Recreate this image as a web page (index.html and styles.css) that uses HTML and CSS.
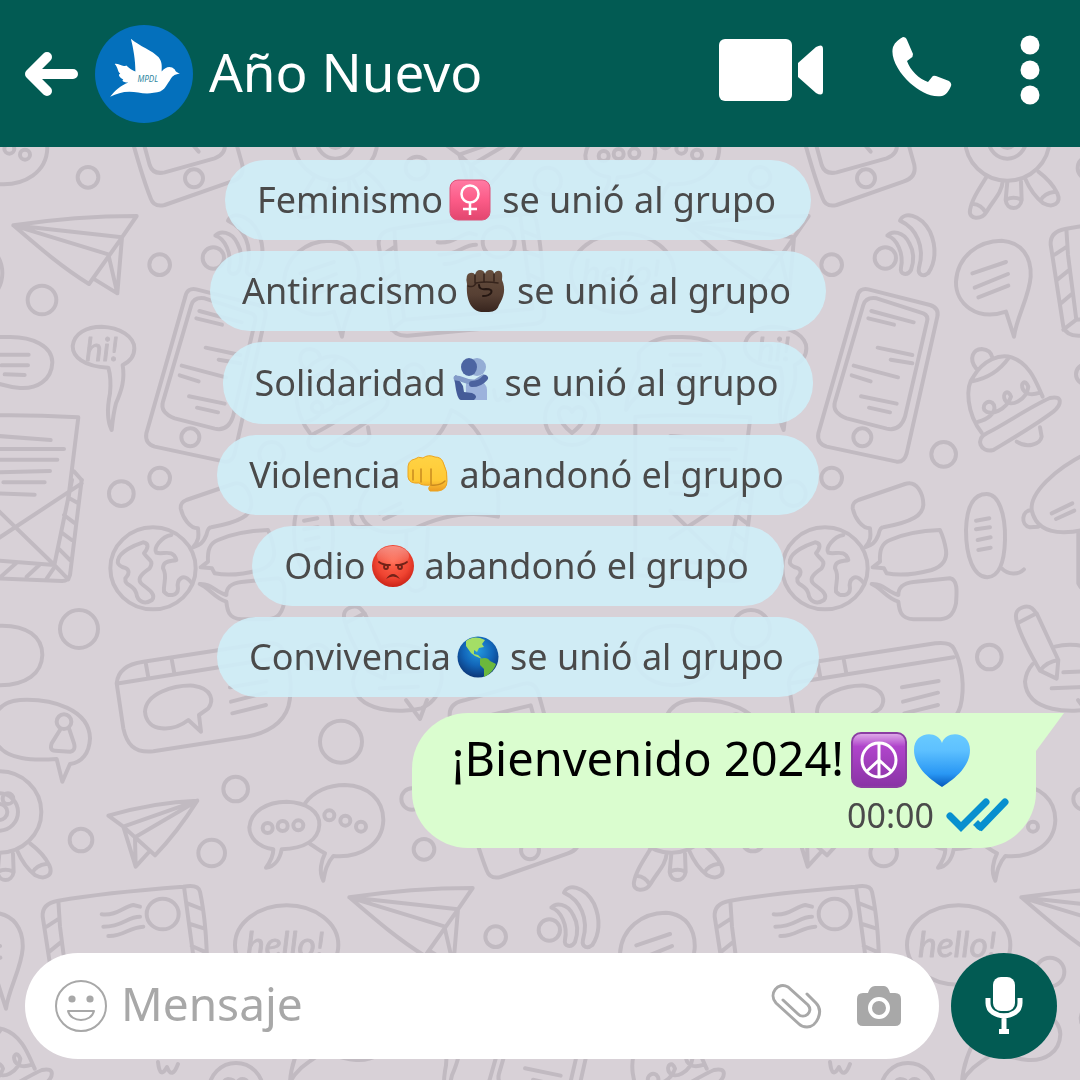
FILE: index.html
```html
<!DOCTYPE html>
<html lang="es">
<head>
<meta charset="UTF-8">
<meta name="viewport" content="width=device-width, initial-scale=1.0">
<title>Año Nuevo</title>
<link rel="stylesheet" href="styles.css">
</head>
<body>

<!-- Fondo del chat: garabatos que se repiten al tresbolillo -->
<svg class="wallpaper" aria-hidden="true">
  <defs>
    <g id="doodles">
      <g transform="translate(0 140) scale(.33333)">
        <!-- avión grande -->
        <path d="M40 256C160 238 280 228 410 228L366 292L267 432C190 385 120 325 40 256L366 292M40 256L325 343L352 460L280 416M366 292L352 460"/>
        <circle cx="264" cy="112" r="31"/>
        <circle cx="479" cy="374" r="31"/>
        <circle cx="126" cy="480" r="43"/>
        <circle cx="479" cy="1014" r="31"/>
        <circle cx="364" cy="1061" r="37"/>
        <!-- hi! -->
        <path d="M325 683C250 680 218 650 218 618C222 580 260 560 305 560C360 562 403 590 403 625C403 650 390 665 368 675C375 720 365 750 348 790C340 820 337 850 335 870C320 840 322 800 330 760C333 730 330 700 325 683Z"/>
        <text x="256" y="662" font-size="98">hi!</text>
        <path d="M-100 640C-70 600 -20 590 20 591C100 588 157 620 157 667C155 722 110 747 60 744C10 740 -20 725 -40 720C-70 745 -110 760 -138 810C-135 760 -115 710 -100 690ZM-5 644H86M5 676H84M14 703L74 705"/>
        <!-- carta -->
        <path d="M-110 830C0 822 130 826 235 832L205 1075M-5 888L152 900M-5 927H192M-5 959H172M-5 997L150 993M10 1027H134M-5 1060L104 1064M222 994L245 1020"/>
      </g>
      <g transform="translate(48 140) scale(.33333)">
        <!-- tableta inclinada -->
        <path d="M258 20C275 80 290 130 308 175Q318 203 350 195L550 125Q590 112 583 75L465 -350Q455 -392 420 -385L240 -335Q190 -325 198 -280ZM290 20L305 75Q315 105 350 97L500 55Q535 42 530 10L440 -320L235 -270ZM435 15L452 35"/>
        <circle cx="438" cy="115" r="27"/>
        <!-- monstruo -->
        <ellipse cx="862" cy="0" rx="126" ry="122"/>
        <circle cx="862" cy="0" r="56"/><circle cx="862" cy="0" r="24"/><circle cx="888" cy="-40" r="16"/>
        <path d="M800 110C775 150 755 180 750 210C745 240 785 240 800 215C820 180 845 160 848 125M757 192C775 190 790 205 795 215M862 125L857 180C860 212 900 212 905 180L903 125M860 178Q880 168 903 178M915 115C930 150 950 175 970 190C1000 205 1025 190 1012 160C1000 135 975 110 955 95M962 182Q970 160 1005 155"/>
        <!-- ondas -->
        <circle cx="496" cy="354" r="32"/>
        <path d="M502 287C515 272 550 272 568 310C585 340 580 370 573 390C563 408 538 405 543 383C552 340 530 295 502 287ZM540 242C550 215 600 220 630 275C652 325 645 370 625 399C612 410 592 408 597 383C615 320 590 265 540 242Z"/>
        <!-- bocadillo en gota -->
        <path d="M858 515C770 545 706 490 708 425C712 350 775 302 845 302C905 306 935 350 932 410C928 470 890 530 882 590ZM757 400L858 366M764 443L864 402M775 472L865 437"/>
        <!-- móvil -->
        <path d="M412 470Q418 442 445 448L630 495Q658 505 652 530L560 940Q552 968 530 965L320 920Q290 910 295 880ZM430 495Q438 470 470 475L610 520Q626 527 621 545L555 830Q540 875 500 866L380 835Q335 818 345 785ZM454 513L581 547M445 535L522 554M473 623L577 645M512 659L577 670M401 677L534 712M395 706L452 724M423 769L530 791M447 803L510 817"/>
        <circle cx="427" cy="892" r="27"/>
        <circle cx="671" cy="943" r="37"/>
        <circle cx="1098" cy="703" r="30"/>
        <!-- gorro -->
        <path d="M768 685C745 655 760 628 785 627C805 628 815 640 818 655M785 878C740 820 735 740 760 710C790 660 840 640 875 652C930 670 950 730 968 770M757 724C800 715 840 690 865 655M775 845C800 840 830 820 822 795C810 775 785 790 793 810C810 830 860 810 873 770C865 745 845 760 855 780C870 805 920 780 925 740C915 715 900 730 910 750C920 765 940 765 960 758M800 880C860 850 930 800 990 774C1030 765 1025 795 1000 815C940 860 870 900 820 930C780 940 765 895 800 880ZM890 905C920 925 960 915 965 890L960 862"/>
      </g>
      <g transform="translate(0 480) scale(.33333)">
        <!-- sobre bajo la carta -->
        <path d="M245 0L210 285Q205 304 185 303L-5 295L-110 285V-190M216 0L163 255L-5 242L-85 238M-5 175L245 10M-5 92L163 255L205 298M208 55L235 70M192 105L222 128M185 158L215 180M175 205L210 240M48 250L5 288M118 255L80 290M163 262L140 296"/>
        <circle cx="237" cy="447" r="57"/>
        <path d="M0 437C80 435 127 470 127 525C125 580 80 615 0 616C-80 612 -120 560 -110 510C-100 460 -60 438 0 437Z"/>
        <!-- persona -->
        <path d="M170 837C100 842 20 840 -10 790C-40 720 -10 665 60 660C160 655 268 690 270 775C268 820 245 848 210 852L187 905ZM180 750L155 790Q148 812 165 812L210 815Q228 812 222 790L208 748"/>
        <circle cx="192" cy="725" r="22"/>
        <!-- navegador -->
        <path d="M350 610Q355 555 430 545L790 490Q835 485 845 505C870 550 880 620 865 680C850 730 800 760 740 770L460 814C400 820 380 790 370 745ZM357 610L845 532M437 548L445 592M515 537L523 580M565 720C520 755 440 760 435 695C438 640 520 615 580 617C640 625 640 665 625 685L597 705L603 755ZM690 622L800 603M693 665L798 638M697 700L798 675"/>
        <circle cx="1023" cy="785" r="63"/>
        <circle cx="707" cy="927" r="37"/>
      </g>
      <g transform="translate(68 460) scale(.33333)">
        <!-- mundo -->
        <ellipse cx="255" cy="325" rx="128" ry="123"/>
        <path d="M150 300C155 275 200 255 225 247C245 250 240 265 228 280C240 300 260 300 245 325C215 345 205 360 225 375C245 390 265 405 252 420C230 435 208 425 205 400C195 370 170 380 172 355C190 335 180 325 165 322C150 315 148 310 150 300ZM310 225C280 230 255 265 265 278C285 285 315 265 325 300C310 305 285 300 285 325C300 350 285 370 288 395C300 410 330 410 330 385C325 360 345 335 370 368"/>
        <path d="M390 205C365 205 345 175 338 145Q336 128 355 120L495 72C530 60 550 100 550 135C548 165 520 185 430 202Q420 202 415 225C405 250 395 255 375 262C395 240 392 225 390 205ZM398 322L420 305C418 270 425 250 450 240C490 222 550 212 600 210Q612 235 618 270C622 300 605 320 575 330C530 342 480 348 440 340L432 325ZM395 372C430 370 440 395 475 405C475 380 490 370 520 366L630 355C655 360 650 400 648 430C640 470 620 478 590 478L520 478C480 475 478 450 475 425C440 415 425 385 395 372Z"/>
        <!-- micrófono -->
        <path d="M740 102C775 102 797 160 795 240C793 310 775 350 742 352C700 350 678 290 678 210C680 140 700 102 740 102ZM785 325C805 345 835 345 852 328M708 182L748 175M708 208L750 202M713 240L752 232M715 270L752 263"/>
        <!-- megáfono -->
        <path d="M1040 -20C940 30 870 100 875 150C890 220 960 225 1030 210C1110 170 1200 150 1290 170C1300 60 1260 -100 1150 -150C1130 -90 1100 -50 1040 -20ZM875 150C845 150 840 195 870 202L895 200M935 160L997 130M948 177L1003 152M1015 215V370Q1035 410 1070 380L1080 205"/>
        <!-- lápiz -->
        <path d="M832 490L890 460L955 600L950 656L900 632C870 580 840 520 832 490C820 455 835 445 855 440C875 438 882 450 890 462M900 632Q920 605 955 600M945 560C1000 545 1060 560 1100 590C1140 640 1120 720 1060 745C1000 760 860 760 855 665Q858 635 878 612M970 637L1060 633M935 685L1050 680"/>
        <circle cx="748" cy="591" r="37"/>
      </g>
      <g transform="translate(0 740) scale(.33333)">
        <!-- avión pequeño -->
        <path d="M325 227C400 205 500 185 592 182C555 240 510 300 465 346L405 292L370 260ZM370 260L592 182L405 292L407 380L370 260M407 380L447 336"/>
        <circle cx="243" cy="300" r="34"/>
        <circle cx="635" cy="339" r="40"/>
        <circle cx="1236" cy="177" r="32"/>
        <!-- conversación -->
        <path d="M820 328C770 320 748 290 748 262C752 215 800 185 860 185C920 187 960 215 958 255C955 300 915 325 845 328C840 355 825 380 798 383C815 360 820 345 820 328ZM915 190C940 155 985 135 1035 135C1105 137 1150 180 1150 240C1148 310 1085 355 1000 348C980 370 975 395 970 422C955 395 965 360 975 340C955 330 945 320 930 312"/>
        <circle cx="803" cy="264" r="15"/><circle cx="848" cy="258" r="15"/><circle cx="895" cy="256" r="15"/>
        <circle cx="988" cy="226" r="15"/><circle cx="1036" cy="242" r="15"/><circle cx="1083" cy="260" r="15"/>
        <!-- sobre -->
        <path d="M166 776L128 530Q125 490 175 482C300 460 420 450 550 440Q595 432 600 455C620 550 620 640 625 740Q625 765 590 768L216 803Q175 805 166 776ZM175 482L180 560L205 755L590 722L552 440M140 560L178 535M148 635L185 605M160 705L195 675M166 785L205 755M562 490L605 507M570 552L612 565M575 618L620 638M305 523C350 528 370 500 400 495L420 500M310 560C370 560 380 530 420 530M325 588C370 590 385 562 430 560"/>
        <ellipse cx="488" cy="522" rx="48" ry="46"/>
        <!-- hello! -->
        <ellipse cx="860" cy="615" rx="155" ry="119"/>
        <text x="738" y="650" font-size="106">hello!</text>
      </g>
      <!-- corazón -->
      <circle cx="572" cy="418" r="27"/>
      <path d="M572 433C556 420 556 408 564 407Q570 407 572 412Q576 405 582 408C590 414 582 425 572 433ZM406 700L420 719L427 700M494 390Q496 408 503 395Q508 408 514 392"/>
    </g>
    <pattern id="tile" width="672" height="1344" patternUnits="userSpaceOnUse">
      <use href="#doodles" x="-336" y="-672"/>
      <use href="#doodles" x="336" y="-672"/>
      <use href="#doodles" x="-672"/>
      <use href="#doodles"/>
      <use href="#doodles" x="672"/>
      <use href="#doodles" x="-336" y="672"/>
      <use href="#doodles" x="336" y="672"/>
      <use href="#doodles" y="1344"/>
      <use href="#doodles" x="672" y="1344"/>
    </pattern>
  </defs>
  <rect width="100%" height="100%" fill="url(#tile)"/>
</svg>

<header class="topbar">
  <button class="icon-btn" type="button" aria-label="Atrás">
    <svg width="54" height="44" viewBox="0 0 54 44"><path d="M22 5L5 22L22 39M7 22H48" fill="none" stroke="#fff" stroke-width="10" stroke-linecap="round" stroke-linejoin="round"/></svg>
  </button>
  <svg class="avatar" viewBox="0 0 97 97" role="img" aria-label="MPDL">
    <circle cx="48.500" cy="48.500" r="48.500" fill="#0470bc"/>
    <path d="M35.500 13.500C44 21 57 25 63 32C67 37 66 42 66 46C70 41 75 40 79 44C80 47 82 47 84 48C78 49 76 51 74 55C70 60 69 67 58 67C49 69 42 66 34 66C27 66 21 68 15 71C20 65 25 60 33 57C28 57 26 55 28 54C23 51 23 49 25 48C22 46 23 42 19.500 38.500C24 38 27 42 31 40C34 43 37 45 40 46C40 35 38 23 35.500 13.500Z" fill="#fff"/>
    <text x="42" y="56" class="avatar-text">MPDL</text>
  </svg>
  <h1 class="chat-name">Año Nuevo</h1>
  <div class="actions">
    <button class="icon-btn" type="button" aria-label="Videollamada">
      <svg width="105" height="62" viewBox="0 0 105 62" fill="#fff"><rect width="73" height="62" rx="6"/><path d="M79 24L97 8Q104 4 104 10V52Q104 58 97 54L79 38Z"/></svg>
    </button>
    <button class="icon-btn" type="button" aria-label="Llamar">
      <svg width="60" height="66" viewBox="0 0 60 66" fill="#fff"><path d="M1 10C3 5 7 2 11 0Q14 0 15 3L21 17Q21 20 19 21L15 24C18 33 27 42 36 45L40 40Q41 38 44 39L57 44Q60 46 59 49C57 54 54 58 50 59C39 61 27 54 18 46C7 36 -2 21 1 10Z"/></svg>
    </button>
    <button class="icon-btn" type="button" aria-label="Más opciones">
      <svg width="20" height="70" viewBox="0 0 20 70" fill="#fff"><circle cx="10" cy="10" r="9.500"/><circle cx="10" cy="35" r="9.500"/><circle cx="10" cy="60" r="9.500"/></svg>
    </button>
  </div>
</header>

<main class="chat">
  <p class="notice">
    <span>Feminismo</span>
    <svg class="emoji" viewBox="0 0 42 42" role="img" aria-label="Signo femenino">
      <defs><linearGradient id="pink" x2="0" y2="1"><stop stop-color="#ff7ba4"/><stop offset=".5" stop-color="#fc5c88"/><stop offset="1" stop-color="#e2466f"/></linearGradient></defs>
      <rect x="1" y="1" width="40" height="40" rx="8" fill="url(#pink)" stroke="#dc5379"/>
      <g fill="none" stroke="#fff" stroke-width="2.500"><circle cx="21" cy="15" r="8.500"/><path d="M21 23V36M14 30H28"/></g>
    </svg>
    <span>se unió al grupo</span>
  </p>
  <p class="notice">
    <span>Antirracismo</span>
    <svg class="emoji" viewBox="0 0 42 42" role="img" aria-label="Puño en alto">
      <defs><linearGradient id="brown" x2="0" y2="1"><stop stop-color="#67503f"/><stop offset=".6" stop-color="#563f33"/><stop offset="1" stop-color="#37251e"/></linearGradient></defs>
      <path d="M3 14Q1 4 6 3Q10 2 11 5Q12 0 16 0Q20 0 21 4Q22 0 26 0Q30 0 30 4Q32 0 36 1Q39 2 38 10C42 19 40 27 35 35Q33 42 25 42H17C5 40 2 26 3 14Z" fill="url(#brown)"/>
      <path d="M11 5V13M20 4V11M30 4V11M4 16Q10 18 12 13Q22 11 34 13" fill="none" stroke="#36241c" stroke-width="1.500" stroke-linecap="round"/>
      <path d="M15 15Q15 20 22 19Q29 19 27 23Q25 26 19 26" fill="none" stroke="#251712" stroke-width="2" stroke-linecap="round"/>
    </svg>
    <span>se unió al grupo</span>
  </p>
  <p class="notice">
    <span>Solidaridad</span>
    <svg class="emoji emoji-raised" viewBox="0 0 42 42" role="img" aria-label="Abrazo">
      <path d="M14 42C15 34 12 27 16 22H26Q35 25 35 32V42Z" fill="#9cb2dc"/>
      <ellipse cx="25" cy="9" rx="9" ry="9" fill="#94add5"/>
      <path d="M4 17Q1 19 3 25Q5 42 9 42H22Q27 38 20 35L12 34L11 28Z" fill="#455b98"/>
      <ellipse cx="17" cy="9" rx="8" ry="9" fill="#4c65a2"/>
      <path d="M4 20C11 20 13 25 23 24L31 19" fill="none" stroke="#839bc9" stroke-width="5" stroke-linecap="round"/>
      <path d="M20 26Q28 26 33 20" fill="none" stroke="#4b629f" stroke-width="6" stroke-linecap="round"/>
    </svg>
    <span>se unió al grupo</span>
  </p>
  <p class="notice">
    <span>Violencia</span>
    <svg class="emoji" viewBox="0 0 42 42" role="img" aria-label="Puño">
      <defs><linearGradient id="gold" x2="0" y2="1"><stop stop-color="#ffd344"/><stop offset=".7" stop-color="#ffc935"/><stop offset="1" stop-color="#ed9c23"/></linearGradient></defs>
      <path d="M1 17Q0 6 8 5Q11 2 16 4Q21 0 28 3Q34 3 36 8Q41 18 40 27Q40 36 31 37L23 37Q20 34 24 31Q15 32 12 29Q2 30 1 23Z" fill="url(#gold)" stroke="#eca41f"/>
      <path d="M6 16V26M14 15V28M24 15V30M24 31Q33 32 38 27" fill="none" stroke="#c98a1f" stroke-width="1.500" stroke-linecap="round"/>
    </svg>
    <span>abandonó el grupo</span>
  </p>
  <p class="notice">
    <span>Odio</span>
    <svg class="emoji" viewBox="0 0 42 42" role="img" aria-label="Cara furiosa">
      <defs><radialGradient id="red" cx=".5" cy=".4" r=".6"><stop stop-color="#ff674e"/><stop offset=".65" stop-color="#ef4431"/><stop offset="1" stop-color="#cb2317"/></radialGradient><linearGradient id="shine" x2="0" y2="1"><stop stop-color="#fff" stop-opacity=".4"/><stop offset="1" stop-color="#fff" stop-opacity="0"/></linearGradient></defs>
      <circle cx="21" cy="21" r="21" fill="url(#red)"/>
      <ellipse cx="21" cy="11" rx="16" ry="10" fill="url(#shine)"/>
      <g fill="none" stroke="#722318" stroke-width="1.800" stroke-linecap="round"><path d="M7 17Q11 20 18 20M35 17Q31 20 24 20"/><circle cx="14" cy="22" r="2"/><circle cx="28" cy="22" r="2"/></g>
      <path d="M14 34Q21 24 28 34Q21 29 14 34Z" fill="#722318"/>
    </svg>
    <span>abandonó el grupo</span>
  </p>
  <p class="notice">
    <span>Convivencia</span>
    <svg class="emoji" viewBox="0 0 42 42" role="img" aria-label="Mundo">
      <defs><radialGradient id="sea" cx=".5" cy=".35" r=".65"><stop stop-color="#2499de"/><stop offset=".55" stop-color="#1266b9"/><stop offset="1" stop-color="#0c3779"/></radialGradient></defs>
      <circle cx="21" cy="21" r="20.500" fill="url(#sea)"/>
      <path d="M9 5Q15 0 23 2L28 4L25 8L27 11L22 12L20 16L17 14L17 18L21 19L25 23L18 20L14 17L9 10Z" fill="#a4de66"/>
      <path d="M23 23Q30 20 33 25L39 28C37 34 32 39 27 41L27 33L23 29Z" fill="#6bb83d"/>
    </svg>
    <span>se unió al grupo</span>
  </p>

  <article class="message">
    <div class="message-text">
      <span class="message-body">¡Bienvenido 2024!</span>
      <svg class="emoji-big" viewBox="0 0 56 56" role="img" aria-label="Símbolo de la paz">
        <defs><linearGradient id="violet" x2="0" y2="1"><stop stop-color="#e1b0ea"/><stop offset=".25" stop-color="#b045cb"/><stop offset="1" stop-color="#8933a5"/></linearGradient></defs>
        <rect x="1" y="1" width="54" height="54" rx="9" fill="url(#violet)" stroke="#8b3ea3" stroke-width="2"/>
        <g fill="none" stroke="#fff" stroke-width="3"><circle cx="28" cy="28" r="17"/><path d="M28 11V45M28 28L16 39M28 28L40 39"/></g>
      </svg>
      <svg class="emoji-big" viewBox="0 0 56 56" role="img" aria-label="Corazón azul">
        <defs><linearGradient id="blue" x2="0" y2="1"><stop stop-color="#68caff"/><stop offset=".3" stop-color="#5ec1ff"/><stop offset=".75" stop-color="#2997f4"/><stop offset="1" stop-color="#0558bc"/></linearGradient></defs>
        <path d="M28 55C14 46 0 34 0 18C0 -1 24 -2 28 11C32 -2 56 -1 56 18C56 34 42 46 28 55Z" fill="url(#blue)"/>
      </svg>
    </div>
    <div class="message-meta">
      <time datetime="00:00">00:00</time>
      <svg width="64" height="34" viewBox="0 0 64 34" role="img" aria-label="Leído"><path d="M4 18L15 29L40 4M33 28L35 29L59 4" fill="none" stroke="#078fcf" stroke-width="7" stroke-linecap="round"/><path d="M27 27L32 22L38 28L34 33Z" fill="#078fcf"/></svg>
    </div>
  </article>
</main>

<form class="composer">
  <div class="composer-box">
    <button class="icon-btn" type="button" aria-label="Emojis">
      <svg width="52" height="52" viewBox="0 0 52 52"><circle cx="26" cy="26" r="25" fill="none" stroke="#a8a8a8" stroke-width="2"/><circle cx="17" cy="19" r="3.600" fill="#a8a8a8"/><circle cx="35" cy="19" r="3.600" fill="#a8a8a8"/><path d="M13 31H39C36 43 16 43 13 31Z" fill="none" stroke="#a8a8a8" stroke-width="2" stroke-linejoin="round"/></svg>
    </button>
    <input class="composer-input" type="text" aria-label="Mensaje" placeholder="Mensaje">
    <button class="icon-btn" type="button" aria-label="Adjuntar">
      <svg width="52" height="46" viewBox="0 0 52 46"><path d="M36 11L45 20C53 28 46 44 36 44Q31 44 28 41L5 20C-3 11 7 -2 17 4L37 22C43 29 33 37 27 31L12 17" fill="none" stroke="#a8a8a8" stroke-width="3" stroke-linecap="round"/></svg>
    </button>
    <button class="icon-btn" type="button" aria-label="Cámara">
      <svg width="44" height="40" viewBox="0 0 44 40"><path d="M6 7H11Q13 0 18 0H27Q31 0 33 7H38Q44 7 44 13V34Q44 40 38 40H6Q0 40 0 34V13Q0 7 6 7Z" fill="#a8a8a8"/><circle cx="22" cy="22" r="9" fill="#a8a8a8" stroke="#fff" stroke-width="4"/></svg>
    </button>
  </div>
  <button class="mic-btn" type="button" aria-label="Grabar mensaje de voz">
    <svg width="38" height="58" viewBox="0 0 38 58"><rect x="8" width="22" height="34" rx="8" fill="#fff"/><path d="M3 21V26C3 43 35 43 35 26V21M19 39V54" fill="none" stroke="#fff" stroke-width="5"/><path d="M14 52H24V57H14Z" fill="#fff"/></svg>
  </button>
</form>

</body>
</html>
```
FILE: styles.css
```css
* {
  box-sizing: border-box;
}

body {
  margin: 0;
  min-height: 100vh;
  display: flex;
  flex-direction: column;
  background: #d8d1d7;
  color: #4a4a4a;
  font-family: "Noto Sans", sans-serif;
}

/* Fondo */
.wallpaper {
  position: fixed;
  top: 0;
  left: 0;
  z-index: -1;
  width: 100%;
  height: 100%;
}

#doodles {
  fill: none;
  stroke: #c1bac1;
  stroke-width: 4px;
  stroke-linecap: round;
  stroke-linejoin: round;
}

#doodles g {
  stroke-width: 12px;
}

#doodles text {
  fill: #c1bac1;
  stroke-width: 3px;
  font-family: Lato, sans-serif;
  font-style: italic;
}

/* Botones */
.icon-btn {
  display: flex;
  padding: 0;
  border: 0;
  background: none;
  cursor: pointer;
}

/* Cabecera */
.topbar {
  display: flex;
  align-items: center;
  gap: 16px;
  min-height: 147px;
  padding: 0 40px 0 25px;
  background: #025b53;
}

.avatar {
  flex: none;
  width: 98px;
  height: 98px;
}

.avatar-text {
  fill: #2e86a0;
  font-size: 8px;
  font-style: italic;
}

.chat-name {
  margin: 0;
  padding-bottom: 4px;
  color: #fff;
  font-size: 53px;
  font-weight: 400;
  line-height: 72px;
}

.actions {
  display: flex;
  align-items: center;
  gap: 68px;
  margin: 0 0 8px auto;
}

/* Conversación */
.chat {
  flex: 1;
  display: flex;
  flex-direction: column;
  align-items: center;
  gap: 11px;
  padding: 13px 44px 24px 0;
}

.notice {
  display: flex;
  align-items: center;
  gap: 6px;
  margin: 0;
  padding: 16px 35px 16px 32px;
  border-radius: 40px;
  background: rgba(207, 238, 248, 0.9);
  font-size: 36px;
  line-height: 48px;
}

.emoji {
  flex: none;
  width: 42px;
  height: 42px;
  margin-right: 5px;
}

.emoji-raised {
  margin-bottom: 8px;
}

/* Mensaje enviado */
.message {
  position: relative;
  align-self: flex-end;
  margin-top: 5px;
  padding: 12px 26px 13px 40px;
  border-radius: 56px 0 56px 56px;
  background: #dafdcf;
}

.message::after {
  content: "";
  position: absolute;
  top: 0;
  left: 100%;
  width: 28px;
  height: 38px;
  background: #dafdcf;
  clip-path: polygon(0 0, 100% 0, 0 100%);
}

.message-text {
  display: flex;
  align-items: center;
  gap: 7px;
  height: 70px;
  margin-right: 40px;
  color: #000;
  font-size: 47px;
  line-height: 64px;
}

.message-body {
  padding-bottom: 4px;
}

.emoji-big {
  flex: none;
  width: 56px;
  height: 56px;
}

.message-meta {
  display: flex;
  justify-content: flex-end;
  align-items: center;
  gap: 12px;
  font-size: 34px;
  line-height: 40px;
}

/* Barra de escritura */
.composer {
  display: flex;
  gap: 12px;
  padding: 0 23px 21px 25px;
}

.composer-box {
  flex: 1;
  display: flex;
  align-items: center;
  gap: 34px;
  min-width: 0;
  height: 106px;
  padding: 0 38px 0 30px;
  border-radius: 53px;
  background: #fff;
}

.composer-input {
  flex: 1;
  min-width: 0;
  margin-left: -20px;
  padding: 0 0 6px;
  border: 0;
  outline: 0;
  background: none;
  color: #4a4a4a;
  font: 46px "Noto Sans", sans-serif;
}

.composer-input::placeholder {
  color: #a8a8a8;
  opacity: 1;
}

.mic-btn {
  flex: none;
  display: flex;
  align-items: center;
  justify-content: center;
  width: 106px;
  height: 106px;
  padding: 0;
  border: 0;
  border-radius: 50%;
  background: #025b53;
  cursor: pointer;
}
```
